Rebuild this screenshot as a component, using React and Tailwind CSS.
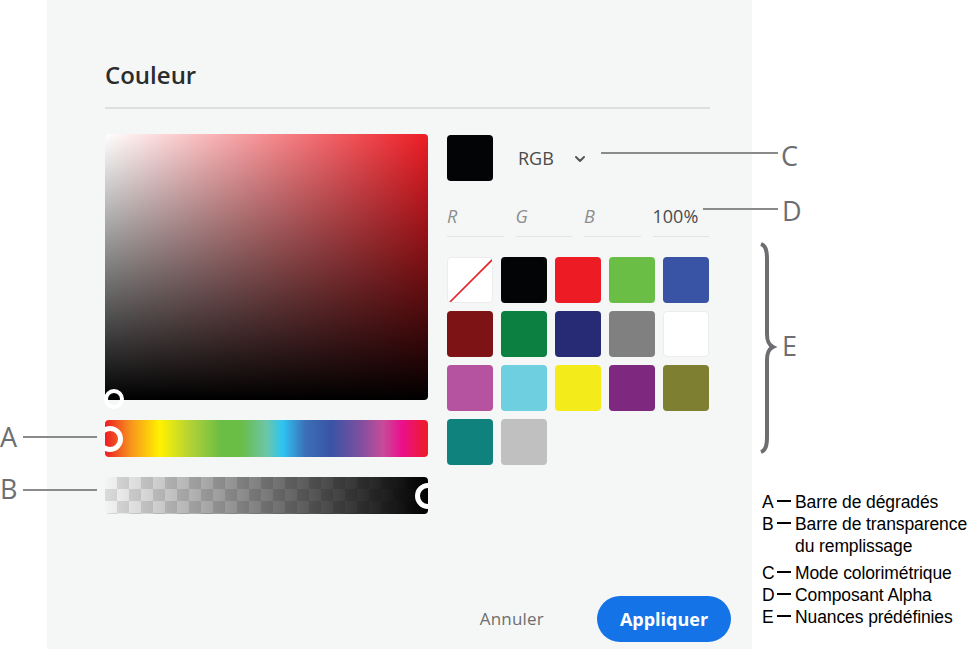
import React from "react";
import { ChevronDown } from "lucide-react";

const swatches = [
  "none", "#020405", "#ed1c24", "#6abd45", "#3954a5",
  "#7d1315", "#0b8041", "#272a74", "#808080", "#ffffff",
  "#b653a0", "#6ecfe0", "#f3ec1a", "#7f2880", "#7f7f32",
  "#0f827e", "#c0c0c0",
];

const legend = [
  { key: "A", lines: ["Barre de dégradés"], gap: "mt-0" },
  { key: "B", lines: ["Barre de transparence", "du remplissage"], gap: "mt-0" },
  { key: "C", lines: ["Mode colorimétrique"], gap: "mt-[5px]" },
  { key: "D", lines: ["Composant Alpha"], gap: "mt-0" },
  { key: "E", lines: ["Nuances prédéfinies"], gap: "mt-0" },
];

const Swatch = ({ color }) => {
  if (color === "none") {
    return (
      <div className="w-[46px] h-[46px] rounded-[4px] bg-white border border-[#ececec] overflow-hidden">
        <svg width="46" height="46" viewBox="0 0 46 46">
          <line x1="1" y1="45" x2="45" y2="1" stroke="#e2242b" strokeWidth="1.6" />
        </svg>
      </div>
    );
  }
  const border = color === "#ffffff" ? "border border-[#ececec]" : "";
  return (
    <div
      className={`w-[46px] h-[46px] rounded-[4px] ${border}`}
      style={{ backgroundColor: color }}
    />
  );
};

const Field = ({ label, italic }) => (
  <div className="h-[41px] border-b border-[#e2e4e4] flex items-center">
    <span
      className={
        italic
          ? "italic text-[18px] text-[#8e8e8e] leading-[32px]"
          : "text-[18px] text-[#4b4b4b] leading-[32px]"
      }
    >
      {label}
    </span>
  </div>
);

const App = () => {
  return (
    <div className="relative w-[967px] h-[649px] bg-white flex overflow-hidden font-['Open_Sans',sans-serif]">
      {/* dialog panel */}
      <div className="ml-[47px] w-[705px] shrink-0 h-full bg-[#f5f7f7] flex flex-col pl-[58px]">
        <h1 className="pt-[59px] text-[24px] leading-[32px] font-semibold text-[#2c2c2c]">
          Couleur
        </h1>
        <div className="mt-[16px] w-[605px] h-[2px] bg-[#dedfdf]" />

        <div className="mt-[25px] flex">
          {/* pickers */}
          <div className="w-[323px] flex flex-col">
            <div className="relative h-[266px] rounded-[4px] bg-[#ed1c24] bg-[linear-gradient(to_top,#000,rgba(0,0,0,0)),linear-gradient(to_right,#fff,rgba(255,255,255,0))]">
              <div className="absolute left-[-1px] bottom-[-9px] w-[20px] h-[20px] rounded-full border-[4px] border-white" />
            </div>
            <div className="relative mt-[20px] h-[37px] rounded-[4px] overflow-hidden bg-[linear-gradient(to_right,#ed1c24_0%,#f7941d_8%,#fff200_17%,#b5d334_26%,#6abd45_36%,#6abd45_42%,#6cc6a8_50%,#2ec4f3_55%,#3c6fb6_62%,#3954a5_70%,#7e4f9f_79%,#c64c9a_86%,#ec0e8c_92%,#ed1c24_100%)]">
              <div className="absolute left-[-8px] top-[6px] w-[26px] h-[26px] rounded-full border-[5px] border-white" />
            </div>
            <div className="relative mt-[20px] h-[37px] rounded-[4px] overflow-hidden bg-[repeating-conic-gradient(#dadada_0_25%,#f4f4f4_0_50%)] bg-size-[24px_24px]">
              <div className="absolute inset-0 bg-[linear-gradient(to_right,rgba(0,0,0,0),#000)]" />
              <div className="absolute right-[-13px] top-[6px] w-[26px] h-[26px] rounded-full border-[5px] border-white" />
            </div>
          </div>

          {/* values */}
          <div className="ml-[19px] w-[262px] flex flex-col">
            <div className="mt-[1px] flex items-center">
              <div className="w-[46px] h-[46px] rounded-[4px] bg-[#020405]" />
              <span className="ml-[25px] text-[18px] leading-[32px] text-[#4b4b4b]">RGB</span>
              <ChevronDown className="ml-[18px] mt-[1px] text-[#555]" size={16} strokeWidth={3} />
            </div>
            <div className="mt-[15px] grid grid-cols-4 gap-x-[12px]">
              <Field label="R" italic />
              <Field label="G" italic />
              <Field label="B" italic />
              <Field label="100%" />
            </div>
            <div className="mt-[20px] grid grid-cols-5 gap-[8px]">
              {swatches.map((c, i) => (
                <Swatch key={i} color={c} />
              ))}
            </div>
          </div>
        </div>

        <div className="mt-auto mb-[7px] pr-[21px] flex items-center justify-end">
          <span className="text-[17px] text-[#6e6e6e] tracking-[0.2px]">Annuler</span>
          <button className="ml-[53px] w-[134px] h-[46px] rounded-full bg-[#1473e6] text-white text-[18px] font-bold">
            Appliquer
          </button>
        </div>
      </div>

      {/* legend */}
      <div className="ml-[10px] shrink-0 pt-[491px] flex flex-col font-['Liberation_Sans',Arial,sans-serif] text-[17.5px] leading-[22px] text-black tracking-[-0.1px]">
        {legend.map((row) => (
          <div key={row.key} className={`flex ${row.gap}`}>
            <div className="w-[33px] h-[22px] shrink-0 flex items-center">
              <span className="w-[13px]">{row.key}</span>
              <span className="ml-[2px] mb-[2px] w-[14px] h-[2px] bg-black" />
            </div>
            <div className="flex flex-col">
              {row.lines.map((l) => (
                <span key={l} className="whitespace-nowrap">{l}</span>
              ))}
            </div>
          </div>
        ))}
      </div>

      {/* callouts */}
      <span className="absolute left-0 top-[423px] text-[27px] leading-[28px] text-[#6d6e71]">A</span>
      <div className="absolute left-[23px] top-[436px] w-[74px] h-[2px] bg-[#8a8a8a]" />
      <span className="absolute left-0 top-[475px] text-[27px] leading-[28px] text-[#6d6e71]">B</span>
      <div className="absolute left-[23px] top-[489px] w-[74px] h-[2px] bg-[#8a8a8a]" />
      <div className="absolute left-[601px] top-[152px] w-[177px] h-[2px] bg-[#8a8a8a]" />
      <span className="absolute left-[781px] top-[142px] text-[27px] leading-[28px] text-[#6d6e71]">C</span>
      <div className="absolute left-[703px] top-[208px] w-[75px] h-[2px] bg-[#8a8a8a]" />
      <span className="absolute left-[782px] top-[197px] text-[27px] leading-[28px] text-[#6d6e71]">D</span>
      <svg className="absolute left-[756px] top-[242px]" width="22" height="212" viewBox="0 0 22 212">
        <path
          d="M5 2 C10 4 11 9 11 18 L11 92 C11 100 13 103 17 105 C13 107 11 110 11 118 L11 194 C11 203 10 208 5 210"
          fill="none"
          stroke="#6d6e71"
          strokeWidth="4"
        />
      </svg>
      <span className="absolute left-[782px] top-[332px] text-[27px] leading-[28px] text-[#6d6e71]">E</span>
    </div>
  );
};

export default App;
